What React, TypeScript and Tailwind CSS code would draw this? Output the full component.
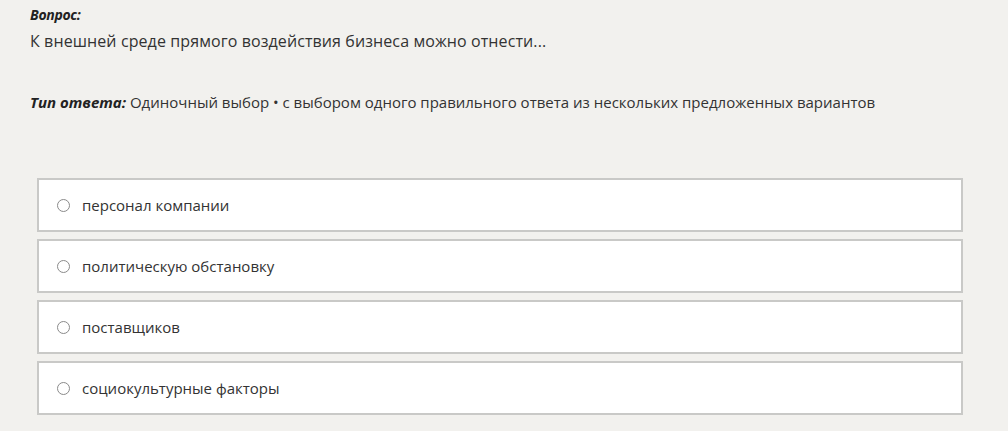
const options = [
  'персонал компании',
  'политическую обстановку',
  'поставщиков',
  'социокультурные факторы',
];

export default function App() {
  return (
    <div className="w-[1008px] h-[431px] overflow-hidden bg-[#f2f1ee] text-[#333] font-['Open_Sans',sans-serif]">
      <div className="pl-[30px] pt-[5px]">
        <div className="text-[14px] font-bold italic leading-[20px] text-[#222] tracking-[-0.3px]">Вопрос:</div>
        <div className="text-[16px] leading-[22px] mt-[5px] tracking-[0.1px]">
          К внешней среде прямого воздействия бизнеса можно отнести...
        </div>
        <div className="mt-[40px] text-[15px] leading-[20px]">
          <span className="font-bold italic text-[#222]">Тип ответа:</span> Одиночный выбор • с выбором одного правильного ответа из нескольких предложенных вариантов
        </div>
      </div>
      <div className="ml-[37px] mt-[66px] w-[926px] flex flex-col gap-[7px]">
        {options.map((o) => (
          <label
            key={o}
            className="h-[54px] bg-white border-2 border-[#c9c9c7] flex items-center pl-[18px] gap-[12px] text-[15px]"
          >
            <span className="w-[13px] h-[13px] rounded-full border border-[#8a8a8a] bg-white" />
            <span>{o}</span>
          </label>
        ))}
      </div>
    </div>
  );
}
